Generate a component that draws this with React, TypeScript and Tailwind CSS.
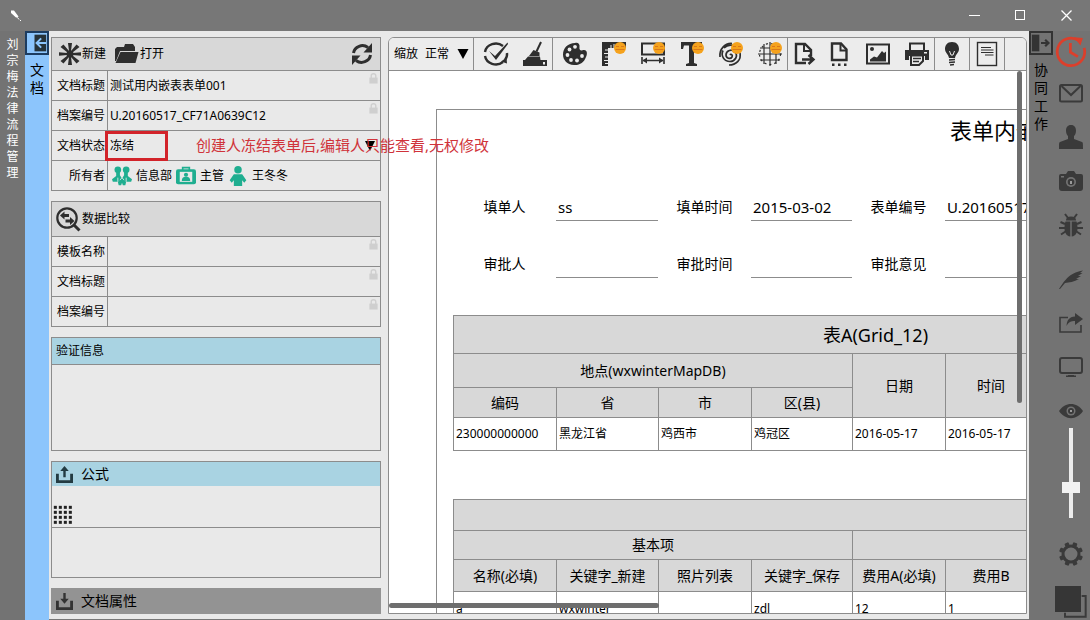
import { useState } from "react";
import type { ReactNode } from "react";

type IconProps = { className?: string };

function Icon({
  className = "h-6 w-6",
  children,
}: IconProps & { children: ReactNode }) {
  return (
    <svg
      viewBox="0 0 24 24"
      className={`shrink-0 overflow-visible ${className}`}
      fill="currentColor"
      aria-hidden="true"
    >
      {children}
    </svg>
  );
}

const line = {
  fill: "none",
  stroke: "currentColor",
  strokeWidth: 2,
} as const;

/* ---------- document icons ---------- */

const NewIcon = () => (
  <Icon>
    <path d="M10 1h4l-1 8h-2zM10 23h4l-1-8h-2zM1 10.200v3.600l8-.8v-2zM23 10.200v3.600l-8-.8v-2z" />
    <path d="m5.500 2.500-3 2.500 7 5.500 1.500-1.500zM18.500 2.500l3 2.500-7 5.500L13 9zM5.500 21.500l-3-2.500 7-5.500L11 15zM18.500 21.500l3-2.500-7-5.500L13 15z" />
    <circle cx="12" cy="12" r="3.500" />
  </Icon>
);

const FolderIcon = () => (
  <Icon>
    <path d="M1 19V7l2-2h7l1-3h8l2 3v4H6L2 19z" />
    <path d="M6.500 10H24.500L21.500 21H1.500z" />
  </Icon>
);

const RefreshIcon = () => (
  <Icon>
    <path
      d="M3.500 11a9 8.500 0 0 1 14.500-5.500M20.500 13a9 8.500 0 0 1-14.500 5.500"
      {...line}
      strokeWidth={3}
    />
    <path d="M22 1v9.500h-8.500zM2 23v-9.500h8.500z" />
  </Icon>
);

const CompareIcon = () => (
  <Icon>
    <circle cx="11" cy="11" r="9.700" {...line} strokeWidth={2.2} />
    <path d="m18 18 5.500 5.500" {...line} strokeWidth={3} />
    <path d="M4 8.500 8.500 4.500V7H13v3H8.500v2.500zM18.500 14 14 10v2.500H9.500v3H14V18z" />
  </Icon>
);

const LockIcon = () => (
  <Icon className="h-[11px] w-[11px]">
    <path d="M3 10h18v13H3z" />
    <path d="M7 11V6a5 4.500 0 0 1 10 0v5" {...line} strokeWidth={3} />
  </Icon>
);

const UploadIcon = ({ down = false }: { down?: boolean }) => (
  <Icon className="h-[17px] w-[17px]">
    <path d="M2 11v11h20V11" {...line} strokeWidth={4} />
    {down ? (
      <path d="M10.300 0h3.400v8H18l-6 7-6-7h4.300z" />
    ) : (
      <path d="M10.300 16h3.400V7H18l-6-7-6 7h4.300z" />
    )}
  </Icon>
);

const DotsIcon = () => (
  <Icon className="h-5 w-5">
    {[1, 7, 13, 19].map((y) =>
      [1, 7, 13, 19].map((x) => (
        <rect key={`${x}-${y}`} x={x} y={y} width="3.600" height="3.600" />
      ))
    )}
  </Icon>
);

const GroupIcon = () => (
  <Icon className="h-5 w-5">
    <circle cx="7" cy="4.500" r="4" />
    <circle cx="17" cy="4.500" r="4" />
    <path d="M5 7h4.500v4l2.500 4 2.500-4V7H19v5l5 4-1 3h-6l-1 4h-3l-1-3-1 3H8l-1-4H1l-1-3 5-4z" />
    <path d="m9.500 17 2.500-3 2.500 3M7 14v5M17 14v5" stroke="#e9e9e9" fill="none" />
  </Icon>
);

const BadgeIcon = () => (
  <Icon className="h-5 w-5">
    <path d="M8 5V2h8v3" {...line} />
    <rect y="4" width="24" height="18" rx="2.500" />
    <rect x="4.500" y="7" width="15" height="12" fill="#e9e9e9" />
    <circle cx="12" cy="10.500" r="2.500" />
    <path d="M7 18c0-4 2-5 5-5s5 1 5 5z" />
  </Icon>
);

const PersonIcon = () => (
  <Icon className="h-5 w-5">
    <circle cx="12" cy="4.500" r="4.500" />
    <path d="M7 10h10l5 7-2.500 3L17 17v7H7v-7l-2.500 3L2 17z" />
  </Icon>
);

/* ---------- toolbar icons ---------- */

const HintBadge = () => (
  <g>
    <circle cx="18" cy="6" r="6" fill="#f5a21d" />
    <path
      d="M14 4.500h3M19 4.500h3M13.500 7.500h9"
      stroke="#d9791a"
      fill="none"
    />
  </g>
);

const CheckIcon = () => (
  <Icon>
    <path
      d="M1 10a11 10 0 0 1 18-6M23 11a11 10 0 0 1-2 7M19 20a11 10 0 0 1-18-6"
      {...line}
      strokeWidth={2.4}
    />
    <path d="m5 9 6 5L23.500.5 24 2 12 18z" />
    <path d="m22.500 15.500.5 6-6-2z" />
  </Icon>
);

const BroomIcon = () => (
  <Icon>
    <path d="m18 0-4.500 9.500" {...line} />
    <path d="m10.500 8 6 2.500V14H6z" />
    <path d="M5 14.500h12l.5 3.500H24v6H0v-6h2z" />
    <path d="M20 20h2v2.500h-2z" fill="#ececec" />
  </Icon>
);

const PaletteIcon = () => (
  <Icon>
    <path d="M12 1c3-1 5 1 4.500 4-.5 3 1 4 4 3 4-.5 4 4 2.500 7-2 5.500-6.500 8.500-12 8C4 22.500 0 18 0 12.500 0 6 5 1 12 1z" />
    <g fill="#ececec">
      <circle cx="12" cy="4.800" r="1.900" />
      <circle cx="6.500" cy="7.500" r="1.900" />
      <circle cx="4.500" cy="13" r="1.900" />
      <circle cx="8" cy="18" r="1.900" />
      <circle cx="14" cy="18.500" r="1.900" />
      <circle cx="19" cy="14" r="1.900" />
    </g>
  </Icon>
);

const RulerIcon = () => (
  <Icon>
    <path d="M0 0h24v6H6v18H0z" />
    <path
      d="M6 8H3M6 11.500H2M6 15H3M6 18.500H2M6 21.500H3M9 6V3M12 6V2"
      stroke="#ececec"
    />
    <HintBadge />
  </Icon>
);

const WidthIcon = () => (
  <Icon>
    <rect x="1" y="1.500" width="22" height="11" {...line} />
    <path d="M1 15v7M23 15v7M2 18.500h20" {...line} strokeWidth={1.6} />
    <path d="M1.500 18.500 6 15.500v6zM22.500 18.500 18 15.500v6z" />
    <HintBadge />
  </Icon>
);

const TextIcon = () => (
  <Icon>
    <path d="M1 0h21v7h-2l-1-3.500h-5V21l3 1v2H6v-2l3-1V3.500H4L3 7H1z" />
    <HintBadge />
  </Icon>
);

const SpiralIcon = () => (
  <Icon>
    <path
      d="M11 13c1-1.500 3 0 2 2-1.500 2.500-6 1.500-6-2 0-4.500 6-6.500 9-3 3.500 4 0 9.500-5 9.500-6 0-9.500-6-7-11M1 15C0 7 6 1 13 1.500M21 11c1.500 7-4 12-11 12M5 6c4-4 10-3.500 13 0"
      {...line}
      strokeWidth={1.7}
    />
    <HintBadge />
  </Icon>
);

const GlobeIcon = () => (
  <Icon>
    <g {...line} strokeWidth={1.2}>
      <path d="M6 2v20M12 0v24M18 2v20M2 6h20M0 12h24M2 18h20" />
      <circle cx="12" cy="12" r="10.500" strokeDasharray="2 3" />
    </g>
    <HintBadge />
  </Icon>
);

const ExportIcon = () => (
  <Icon>
    <path d="M18 21H8V2h9l6 6v6" {...line} strokeWidth={2.4} />
    <path d="M16 2v7h7" {...line} />
    <path d="M14 17.500h10M20.500 13l5 4.500-5 4.500" {...line} strokeWidth={2.4} />
  </Icon>
);

const PageIcon = () => (
  <Icon>
    <path d="M5 18V1.500h9l5.500 6V18z" {...line} strokeWidth={2.4} />
    <path d="M13.500 1.500v7h6" {...line} />
    <path d="M5 21.500h2.500V24H5zM11 21.500h2.500V24H11zM17 21.500h2.500V24H17z" />
  </Icon>
);

const ImageIcon = () => (
  <Icon>
    <rect x="1" y="2.500" width="22" height="19" {...line} />
    <path d="M4 19.500v-2l4-3 3 1 5-6.500 2 2 2-1.500v10z" />
    <circle cx="6" cy="7" r="2" />
  </Icon>
);

const PrintIcon = () => (
  <Icon>
    <path d="M5 8V1.500h14V8" {...line} />
    <path d="M0 8h24v10h-4v-4H4v4H0z" />
    <path d="M6 13.500V23h8l4-4v-5.500z" fill="#ececec" stroke="currentColor" strokeWidth="2" />
    <path d="M8 16.500h8M8 19.500h6" {...line} strokeWidth={1.4} />
    <path d="M19 10h3v1.500h-3z" fill="#ececec" />
  </Icon>
);

const BulbIcon = () => (
  <Icon>
    <path d="M12 0c5 0 7 3.500 7 7 0 4-3.500 5-4 9H9c-.5-4-4-5-4-9 0-3.500 2-7 7-7z" />
    <path d="M9.500 9 11 13h2l1.500-4" stroke="#ececec" fill="none" />
    <path d="m9 18 6-.5M9 20.500l6-.5M10 23l4-.5" {...line} strokeWidth={1.5} />
  </Icon>
);

const NoteIcon = () => (
  <Icon>
    <rect x="2.500" y=".5" width="19" height="23" {...line} strokeWidth={1.4} />
    <path
      d="M6 5.500h10M6 8h12.500M6 10.500h12.500M10 13h8.500"
      {...line}
      strokeWidth={1.2}
    />
  </Icon>
);

/* ---------- side icons ---------- */

const ClockIcon = () => (
  <Icon className="h-[30px] w-[30px] text-[#dc3f2b]">
    <path d="M18 3.500a11 11 0 1 0 4.500 6" {...line} strokeWidth={2.2} />
    <path d="M11.500 5.500V13l6 3.500" {...line} strokeWidth={2.2} />
    <path d="m14.500 1 7 .5-2 6z" />
  </Icon>
);

const MailIcon = () => (
  <Icon>
    <rect x="1" y="4" width="22" height="16.500" rx="1.500" {...line} />
    <path d="m2.500 5 9.500 9 9.500-9" {...line} />
  </Icon>
);

const UserIcon = () => (
  <Icon>
    <path d="M12 0c3.500 0 5 2.500 5 5.500 0 3-1 4.500-2 5.500v3l8 3c1 .5 1 1.500 1 7H0c0-5.500 0-6.500 1-7l8-3v-3C8 10 7 8.500 7 5.500 7 2.500 8.500 0 12 0z" />
  </Icon>
);

const CameraIcon = () => (
  <Icon>
    <path d="M2 5h5l2-3h6l2 3h5q2 0 2 2v12q0 3-3 3H3q-3 0-3-3V7q0-2 2-2z" />
    <circle cx="12" cy="13" r="5" fill="#737373" />
    <circle cx="12" cy="13" r="3.300" />
    <path d="M11 12h2v3h-2z" fill="#9a9a9a" />
    <path d="M2 7h3v1.500H2z" fill="#737373" />
  </Icon>
);

const BugIcon = () => (
  <Icon>
    <path d="M7 7.500Q7 3.500 12 3.500t5 4z" />
    <path d="M11.300 8.500v15C7 23 5.500 19 5.500 15c0-3 .5-5 1-6.500zM12.700 8.500v15c4.300-.5 5.800-4.500 5.800-8.500 0-3-.5-5-1-6.500z" />
    <path
      d="M9 5 6 1M15 5l3-4M6 11 1.500 9M18 11l4.500-2M6 15H0M18 15h6M6.500 18.500 2 21.500M17.500 18.500l4.500 3"
      {...line}
    />
  </Icon>
);

const FeatherIcon = () => (
  <Icon>
    <path d="M0 22C5 15 9 6 24 3.500L21 6h2.500L19 9h3l-5 3h3c-5 3-10 3.500-14 4l-5 6z" />
  </Icon>
);

const ShareIcon = () => (
  <Icon>
    <path d="M9 6.500H1V21h21v-7" {...line} strokeWidth={1.6} />
    <path d="M16 2v3.500C10 6 8 9 7.500 15c2-4 4.500-5 8.500-5v4l8-6z" />
  </Icon>
);

const MonitorIcon = () => (
  <Icon>
    <rect x="1" y="3" width="22" height="15" rx="2" {...line} />
    <path d="M9 20h6v.5h2V22H7v-1.500h2z" />
  </Icon>
);

const EyeIcon = () => (
  <Icon>
    <path d="M0 12c6-9.500 18-9.500 24 0-6 9.500-18 9.500-24 0z" />
    <circle cx="12" cy="12" r="4.500" fill="#737373" />
    <circle cx="12" cy="12" r="3" />
    <circle cx="12" cy="12" r="1" fill="#bbb" />
  </Icon>
);

const GearIcon = () => (
  <Icon>
    <circle cx="12" cy="12" r="8" {...line} strokeWidth={3} />
    {[22, 67, 112, 157, 202, 247, 292, 337].map((angle) => (
      <rect
        key={angle}
        x="9.800"
        y="0"
        width="4.400"
        height="4.500"
        rx="1"
        transform={`rotate(${angle} 12 12)`}
      />
    ))}
  </Icon>
);

const LayersIcon = () => (
  <Icon className="h-8 w-8">
    <path d="M0 0h19.500v19.500H0z" fill="#363636" />
    <path d="M20 7.500h3V23H7.500v-3" {...line} strokeWidth={1.5} />
  </Icon>
);

/* ---------- left column ---------- */

function Panel({ children }: { children: ReactNode }) {
  return (
    <section className="border-x border-t border-[#8c8c8c]">{children}</section>
  );
}

function PropertyRow({
  id,
  label,
  value = "",
}: {
  id: string;
  label: string;
  value?: string;
}) {
  return (
    <div className="flex h-[30px] items-stretch border-b border-[#8c8c8c]">
      <label
        htmlFor={id}
        className="flex w-14 shrink-0 items-center justify-end border-r border-[#8c8c8c] pr-0.5"
      >
        {label}
      </label>
      <input
        id={id}
        readOnly
        defaultValue={value}
        className="min-w-0 flex-1 bg-transparent pl-0.5 outline-none"
      />
      <span className="pt-0.5 pr-px text-[#cfcfcf]">
        <LockIcon />
      </span>
    </div>
  );
}

function StatusRow() {
  return (
    <div className="relative flex h-[30px] items-stretch border-b border-[#8c8c8c]">
      <label
        htmlFor="status"
        className="flex w-14 shrink-0 items-center justify-end border-r border-[#8c8c8c] pr-0.5"
      >
        文档状态
      </label>
      <select
        id="status"
        className="min-w-0 flex-1 appearance-none bg-transparent pl-0.5 outline-none"
      >
        <option>冻结</option>
      </select>
      <span className="pointer-events-none flex items-center pr-1">
        <Icon className="h-3 w-3">
          <path d="M2 2h20L12 22z" />
        </Icon>
      </span>
      <div className="pointer-events-none absolute top-0 left-[53px] h-[30px] w-[63px] border-3 border-[#d2232a]" />
      <p className="pointer-events-none absolute top-0 left-36 z-10 text-[15px] leading-7 whitespace-nowrap text-[#d0333a]">
        创建人冻结表单后,编辑人只能查看,无权修改
      </p>
    </div>
  );
}

const owners = [
  { name: "信息部", icon: <GroupIcon /> },
  { name: "主管", icon: <BadgeIcon /> },
  { name: "王冬冬", icon: <PersonIcon /> },
];

function DocumentColumn() {
  return (
    <div className="flex w-[339px] shrink-0 flex-col gap-2.5 pt-1.5 pr-[7px] pl-0.5 text-xs">
      <Panel>
        <div className="flex h-[33px] items-center border-b border-[#8c8c8c] bg-[#d8d8d8] px-1.5 text-[#2e2e2e]">
          <button className="flex items-center">
            <NewIcon />
            <span className="text-black">新建</span>
          </button>
          <button className="ml-2 flex items-center gap-0.5">
            <FolderIcon />
            <span className="text-black">打开</span>
          </button>
          <button className="ml-auto" aria-label="刷新">
            <RefreshIcon />
          </button>
        </div>
        <PropertyRow id="title" label="文档标题" value="测试用内嵌表表单001" />
        <PropertyRow
          id="number"
          label="档案编号"
          value="U.20160517_CF71A0639C12"
        />
        <StatusRow />
        <div className="flex h-[30px] items-stretch border-b border-[#8c8c8c]">
          <span className="flex w-14 shrink-0 items-center justify-end border-r border-[#8c8c8c] pr-0.5">
            所有者
          </span>
          <ul className="flex items-center gap-1 pl-1">
            {owners.map((owner) => (
              <li key={owner.name} className="flex items-center gap-1">
                <span className="text-[#1fae90]">{owner.icon}</span>
                {owner.name}
              </li>
            ))}
          </ul>
        </div>
      </Panel>

      <Panel>
        <div className="flex h-[35px] items-center gap-0.5 border-b border-[#8c8c8c] bg-[#d8d8d8] px-1">
          <span className="text-[#2e2e2e]">
            <CompareIcon />
          </span>
          <h2>数据比较</h2>
        </div>
        <PropertyRow id="cmp-template" label="模板名称" />
        <PropertyRow id="cmp-title" label="文档标题" />
        <PropertyRow id="cmp-number" label="档案编号" />
      </Panel>

      <Panel>
        <h2 className="flex h-[27px] items-center border-b border-[#8c8c8c] bg-[#a9d3e2] px-1">
          验证信息
        </h2>
        <div className="h-[86px] border-b border-[#8c8c8c]" />
      </Panel>

      <Panel>
        <button className="flex h-6 w-full items-center gap-2 bg-[#a9d3e2] px-1 text-sm">
          <span className="text-[#233b42]">
            <UploadIcon />
          </span>
          公式
        </button>
        <div className="flex h-[42px] items-end border-b border-[#8c8c8c] px-px pb-0.5 text-[#222]">
          <DotsIcon />
        </div>
        <div className="h-[50px] border-b border-[#8c8c8c]" />
      </Panel>

      <button className="flex h-[26px] items-center gap-2 bg-[#939393] px-[5px] text-sm">
        <span className="text-[#333]">
          <UploadIcon down />
        </span>
        文档属性
      </button>
    </div>
  );
}

/* ---------- form area ---------- */

const toolGroups = [
  {
    className: "gap-[15px] pl-2.5 pr-[5px]",
    tools: [
      { name: "校验", icon: <CheckIcon /> },
      { name: "清除", icon: <BroomIcon /> },
    ],
  },
  {
    className: "gap-[15px] pl-2.5 pr-[5px]",
    tools: [
      { name: "调色板", icon: <PaletteIcon /> },
      { name: "标尺", icon: <RulerIcon /> },
      { name: "宽度", icon: <WidthIcon /> },
      { name: "文字", icon: <TextIcon /> },
      { name: "指纹", icon: <SpiralIcon /> },
      { name: "网格", icon: <GlobeIcon /> },
    ],
  },
  {
    className: "gap-[15px] pr-[5px]",
    tools: [
      { name: "导出", icon: <ExportIcon /> },
      { name: "页面", icon: <PageIcon /> },
      { name: "图片", icon: <ImageIcon /> },
      { name: "打印", icon: <PrintIcon /> },
    ],
  },
  { className: "px-[5px]", tools: [{ name: "提示", icon: <BulbIcon /> }] },
  { className: "px-[5px]", tools: [{ name: "说明", icon: <NoteIcon /> }] },
];

function Toolbar() {
  return (
    <div className="flex h-[33px] items-stretch border-b border-[#8c8c8c] bg-[#ececec] text-[#2e2e2e]">
      <div className="flex items-center gap-[7px] border-r border-[#8c8c8c] pr-1 pl-[5px] text-xs text-black">
        <label htmlFor="zoom">缩放</label>
        <div className="flex items-center">
          <select
            id="zoom"
            className="w-8 appearance-none bg-transparent outline-none"
          >
            <option>正常</option>
          </select>
          <Icon className="h-3 w-3">
            <path d="M1 2h22L12 22z" />
          </Icon>
        </div>
      </div>
      {toolGroups.map((group) => (
        <div
          key={group.tools[0].name}
          className={`flex items-center border-r border-[#8c8c8c] ${group.className}`}
        >
          {group.tools.map((tool) => (
            <button key={tool.name} aria-label={tool.name}>
              {tool.icon}
            </button>
          ))}
        </div>
      ))}
    </div>
  );
}

const fields = [
  [
    { id: "filler", label: "填单人", value: "ss" },
    { id: "fill-date", label: "填单时间", value: "2015-03-02" },
    { id: "form-no", label: "表单编号", value: "U.20160517" },
  ],
  [
    { id: "approver", label: "审批人", value: "" },
    { id: "approve-date", label: "审批时间", value: "" },
    { id: "opinion", label: "审批意见", value: "" },
  ],
];

const cellBorder = "border border-[#8c8c8c] font-normal";

function Columns() {
  return (
    <colgroup>
      <col className="w-[103px]" />
      <col className="w-[102px]" />
      <col className="w-[93px]" />
      <col className="w-[101px]" />
      <col className="w-[93px]" />
      <col className="w-[91px]" />
      <col />
    </colgroup>
  );
}

function LocationTable() {
  const row = [
    "230000000000",
    "黑龙江省",
    "鸡西市",
    "鸡冠区",
    "2016-05-17",
    "2016-05-17",
    "",
  ];

  return (
    <table className="mt-[37px] w-[845px] table-fixed border-collapse text-sm">
      <Columns />
      <thead className="bg-[#d8d8d8]">
        <tr className="h-[38px]">
          <th colSpan={7} className={`${cellBorder} text-lg`}>
            表A(Grid_12)
          </th>
        </tr>
        <tr className="h-[34px]">
          <th colSpan={4} className={cellBorder}>
            地点(wxwinterMapDB)
          </th>
          <th rowSpan={2} className={cellBorder}>
            日期
          </th>
          <th rowSpan={2} className={cellBorder}>
            时间
          </th>
          <th rowSpan={2} className={cellBorder} />
        </tr>
        <tr className="h-[30px]">
          {["编码", "省", "市", "区(县)"].map((name) => (
            <th key={name} className={cellBorder}>
              {name}
            </th>
          ))}
        </tr>
      </thead>
      <tbody className="text-xs">
        <tr className="h-[33px]">
          {row.map((cell, i) => (
            <td key={i} className={`${cellBorder} pl-0.5`}>
              {cell}
            </td>
          ))}
        </tr>
      </tbody>
    </table>
  );
}

function ItemTable() {
  const names = [
    "名称(必填)",
    "关键字_新建",
    "照片列表",
    "关键字_保存",
    "费用A(必填)",
    "费用B",
    "",
  ];
  const row = ["a", "wxwinter", "", "zdl", "12", "1", ""];

  return (
    <table className="mt-12 w-[845px] table-fixed border-collapse text-sm">
      <Columns />
      <thead className="bg-[#d8d8d8]">
        <tr className="h-[31px]">
          <th colSpan={7} className={cellBorder} />
        </tr>
        <tr className="h-[29px]">
          <th colSpan={4} className={cellBorder}>
            基本项
          </th>
          <th colSpan={3} className={cellBorder} />
        </tr>
        <tr className="h-8">
          {names.map((name, i) => (
            <th key={i} className={cellBorder}>
              {name}
            </th>
          ))}
        </tr>
      </thead>
      <tbody className="text-xs">
        <tr className="h-[34px]">
          {row.map((cell, i) => (
            <td key={i} className={`${cellBorder} pl-0.5`}>
              {cell}
            </td>
          ))}
        </tr>
      </tbody>
    </table>
  );
}

function FormArea() {
  return (
    <main className="mt-1.5 mr-0.5 mb-[5px] flex min-w-0 flex-1 flex-col overflow-hidden rounded-t-md border border-[#8c8c8c] bg-white">
      <Toolbar />
      <div className="relative min-h-0 flex-1 overflow-hidden pt-[38px] pl-[47px]">
        <div className="w-[879px] border border-[#8c8c8c] px-4">
          <h1 className="pt-1 pl-[497px] text-[22px] leading-8 whitespace-nowrap">
            表单内嵌
          </h1>
          <div className="mt-[47px] flex flex-col gap-[29px]">
            {fields.map((row) => (
              <div
                key={row[0].id}
                className="grid grid-cols-[103px_102px_93px_101px_93px_1fr] items-stretch"
              >
                {row.map((field) => (
                  <div key={field.id} className="contents">
                    <label
                      htmlFor={field.id}
                      className="flex items-center justify-center text-sm"
                    >
                      {field.label}
                    </label>
                    <input
                      id={field.id}
                      defaultValue={field.value}
                      className="h-7 min-w-0 border-b border-[#8c8c8c] pl-0.5 text-[15px] outline-none"
                    />
                  </div>
                ))}
              </div>
            ))}
          </div>
          <LocationTable />
          <ItemTable />
        </div>
        <div className="absolute top-0 right-1 h-[332px] w-[5px] rounded-full bg-[#6e6e6e]" />
        <div className="absolute bottom-[5px] left-0 h-[5px] w-[270px] rounded-full bg-[#6e6e6e]" />
      </div>
    </main>
  );
}

/* ---------- right column ---------- */

const sideTools = [
  { name: "邮件", icon: <MailIcon /> },
  { name: "用户", icon: <UserIcon /> },
  { name: "拍照", icon: <CameraIcon /> },
  { name: "调试", icon: <BugIcon /> },
];

const viewTools = [
  { name: "签名", icon: <FeatherIcon /> },
  { name: "分享", icon: <ShareIcon /> },
  { name: "屏幕", icon: <MonitorIcon /> },
  { name: "查看", icon: <EyeIcon /> },
];

function SideTools() {
  const [opacity, setOpacity] = useState(68);

  return (
    <div className="flex w-9 flex-col items-center overflow-hidden pt-[5px] text-[#3a3a3a]">
      <button aria-label="时间">
        <ClockIcon />
      </button>
      <div className="mt-[15px] flex flex-col gap-5">
        {sideTools.map((tool) => (
          <button key={tool.name} aria-label={tool.name}>
            {tool.icon}
          </button>
        ))}
      </div>
      <div className="mt-[30px] flex flex-col gap-5">
        {viewTools.map((tool) => (
          <button key={tool.name} aria-label={tool.name}>
            {tool.icon}
          </button>
        ))}
      </div>
      <input
        type="range"
        aria-label="透明度"
        value={opacity}
        onChange={(e) => setOpacity(Number(e.target.value))}
        className="mt-[5px] h-[90px] w-[18px] shrink-0 appearance-none bg-transparent [writing-mode:vertical-lr] [&::-webkit-slider-runnable-track]:h-full [&::-webkit-slider-runnable-track]:w-1 [&::-webkit-slider-runnable-track]:bg-[#ececec] [&::-webkit-slider-thumb]:-ml-[7px] [&::-webkit-slider-thumb]:h-[11px] [&::-webkit-slider-thumb]:w-[18px] [&::-webkit-slider-thumb]:appearance-none [&::-webkit-slider-thumb]:bg-[#f2f2f2]"
      />
      <button className="mt-6" aria-label="设置">
        <GearIcon />
      </button>
      <button className="mt-5" aria-label="图层">
        <LayersIcon />
      </button>
    </div>
  );
}

/* ---------- window ---------- */

function TitleBar() {
  return (
    <header className="flex h-[31px] shrink-0 items-center justify-between bg-[#777] pr-px pl-2.5 text-white">
      <Icon className="h-3 w-3">
        <path d="M2 1h6l9 12-2 2h-3L2 6z" />
        <path d="m15 15 3 4M20 21h2" {...line} />
      </Icon>
      <div className="flex h-full">
        <button className="flex w-[46px] items-center justify-center" aria-label="最小化">
          <svg className="h-[11px] w-[11px]" viewBox="0 0 11 11" aria-hidden="true">
            <path d="M0 5.500h11" stroke="currentColor" />
          </svg>
        </button>
        <button className="flex w-[46px] items-center justify-center" aria-label="最大化">
          <svg className="h-[11px] w-[11px]" viewBox="0 0 11 11" aria-hidden="true">
            <rect x=".5" y=".5" width="9" height="9" fill="none" stroke="currentColor" />
          </svg>
        </button>
        <button className="flex w-[46px] items-center justify-center" aria-label="关闭">
          <svg className="h-[11px] w-[11px]" viewBox="0 0 11 11" aria-hidden="true">
            <path d="m.5.5 10 10M10.500.5l-10 10" stroke="currentColor" strokeWidth="1.300" />
          </svg>
        </button>
      </div>
    </header>
  );
}

export default function App() {
  return (
    <div className="flex h-screen flex-col overflow-hidden bg-[#737373] font-['Noto_Sans','Noto_Sans_CJK_SC',sans-serif] text-black">
      <TitleBar />
      <div className="flex min-h-0 flex-1">
        <div className="flex w-[25px] shrink-0 justify-center bg-[#737373] pt-1.5 text-white">
          <p className="w-3 text-xs leading-4 break-all">刘宗梅法律流程管理</p>
        </div>
        <div className="flex w-6 shrink-0 flex-col items-center bg-[#8cc5fc]">
          <button
            className="h-6 w-6 border-2 border-[#1c3c60]"
            aria-label="收起"
          >
            <Icon className="h-5 w-5">
              <path d="M9 2h14v20H9z" fill="#263238" />
              <path
                d="M23 12H12M17 6.500 11.500 12l5.500 5.500"
                fill="none"
                stroke="#8cc5fc"
                strokeWidth="2.400"
              />
            </Icon>
          </button>
          <p className="mt-1.5 w-3.5 text-sm leading-[18px] break-all">文档</p>
        </div>
        <div className="flex min-w-0 flex-1 border-b border-[#777] bg-[#e9e9e9]">
          <DocumentColumn />
          <FormArea />
        </div>
        <div className="flex w-[61px] shrink-0">
          <div className="flex w-6 flex-col items-center">
            <button
              className="h-6 w-6 border-2 border-[#333] text-[#333]"
              aria-label="展开"
            >
              <Icon className="h-5 w-5">
                <path d="M1 2h9v20H1z" />
                <path d="M12 12h9M17 8l4 4-4 4" {...line} strokeWidth={2.6} />
              </Icon>
            </button>
            <p className="mt-1.5 w-3.5 text-sm leading-[18px] break-all">
              协同工作
            </p>
          </div>
          <SideTools />
        </div>
      </div>
    </div>
  );
}
